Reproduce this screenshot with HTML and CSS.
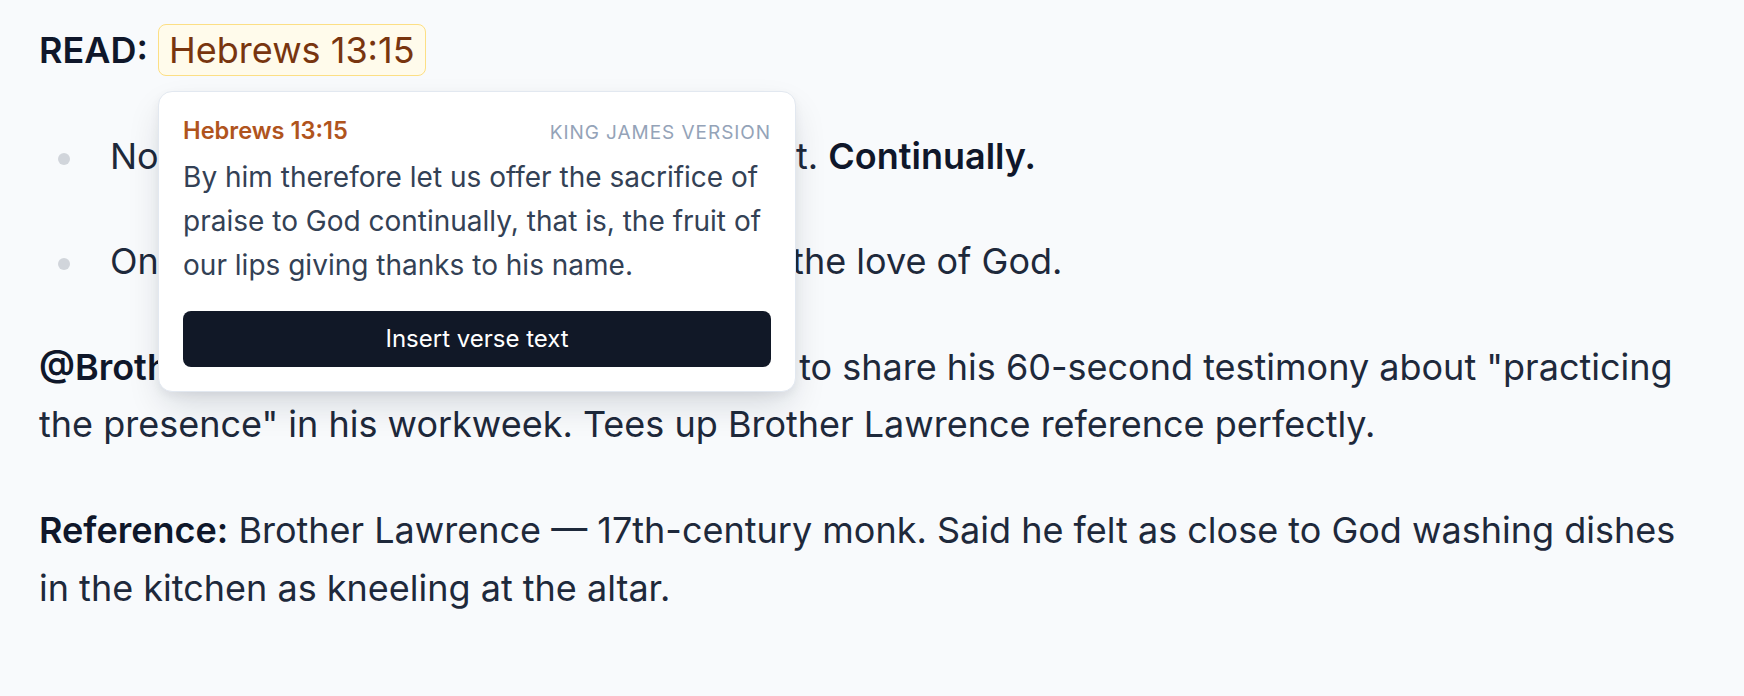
FILE: index.html
```html
<!DOCTYPE html>
<html lang="en">
<head>
<meta charset="utf-8">
<title>Notes</title>
<link rel="stylesheet" href="styles.css">
</head>
<body>
<main class="doc">
  <p class="block read"><strong>READ:</strong> <span class="ref"><span class="pill">Hebrews 13:15</span><span class="popover">
      <span class="pop-head"><span class="pop-title">Hebrews 13:15</span><span class="pop-version">King James Version</span></span>
      <span class="pop-verse">By him therefore let us offer the sacrifice of praise to God continually, that is, the fruit of our lips giving thanks to his name.</span>
      <span class="pop-btn">Insert verse text</span>
    </span></span></p>
  <ul class="block points">
    <li><span>Not sometimes. Not when it's convenient. <strong>Continually.</strong></span></li>
    <li><span>Only possible when we are grounded in the love of God.</span></li>
  </ul>
  <p class="block"><strong>@Brother Dennis:</strong> Ask him ahead of Sunday to share his 60-second testimony about "practicing the presence" in his workweek. Tees up Brother Lawrence reference perfectly.</p>
  <p class="block"><strong>Reference:</strong> Brother Lawrence — 17th-century monk. Said he felt as close to God washing dishes in the kitchen as kneeling at the altar.</p>
</main>
</body>
</html>
```
FILE: styles.css
```css
html, body {
  margin: 0;
  padding: 0;
  background: #f8fafc;
}
body {
  font-family: Inter, "Noto Sans", sans-serif;
  color: #1e293b;
  font-size: 36px;
  line-height: 1.6;
}
.doc {
  padding: 22px 40px 40px 39px;
}
.block {
  margin: 0 0 48px 0;
}
strong {
  font-weight: 600;
  color: #0f172a;
}
.ref {
  display: inline-block;
  position: relative;
}
.pill {
  background: #fffbeb;
  border: 1.5px solid #fcdf85;
  border-radius: 8px;
  padding: 3px 10px;
  color: #78350f;
}
.popover {
  position: absolute;
  top: calc(100% + 11px);
  left: 0;
  z-index: 5;
  width: 588px;
  padding: 24px;
  display: flex;
  flex-direction: column;
  background: #ffffff;
  border: 1px solid #e2e8f0;
  border-radius: 14px;
  box-shadow: 0 16px 36px -6px rgba(15, 23, 42, 0.16), 0 4px 10px rgba(15, 23, 42, 0.05);
}
.pop-head {
  display: flex;
  justify-content: space-between;
  align-items: baseline;
  line-height: 1.3;
}
.pop-title {
  font-size: 23.6px;
  font-weight: 600;
  color: #b0541d;
}
.pop-version {
  font-size: 19px;
  letter-spacing: 0.05em;
  text-transform: uppercase;
  color: #94a3b8;
}
.pop-verse {
  margin-top: 9px;
  font-size: 28px;
  line-height: 44px;
  color: #334155;
}
.pop-btn {
  margin-top: 24px;
  height: 56px;
  display: flex;
  align-items: center;
  justify-content: center;
  background: #111827;
  color: #ffffff;
  border-radius: 8px;
  font-size: 24px;
  font-weight: 400;
}
.points {
  list-style: none;
  padding: 0;
}
.points li {
  display: flex;
  margin: 0 0 48px 0;
  padding-left: 19px;
}
.points li:last-child {
  margin-bottom: 0;
}
.points li::before {
  content: "";
  flex: none;
  width: 12px;
  height: 12px;
  margin: 25px 40px 0 0;
  border-radius: 50%;
  background: #d1d5db;
}
```
